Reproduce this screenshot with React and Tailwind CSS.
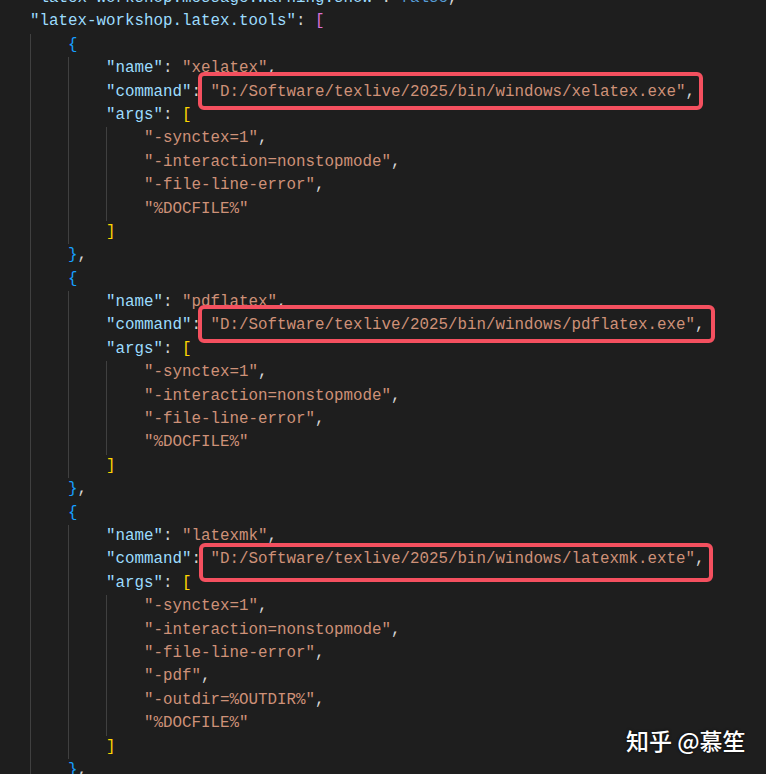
import React from 'react';

const K = 'text-[#9cdcfe]';
const S = 'text-[#ce9178]';
const P = 'text-[#d4d4d4]';
const B1 = 'text-[#da70d6]';
const B2 = 'text-[#179fff]';
const B3 = 'text-[#ffd700]';

const key = (k) => [[`"${k}"`, K], [': ', P]];
const str = (s, comma) => (comma ? [[`"${s}"`, S], [',', P]] : [[`"${s}"`, S]]);

function tool(name, exe, args) {
  const lines = [
    [1, [['{', B2]]],
    [2, [...key('name'), ...str(name, true)]],
    [2, [...key('command'), ...str(`D:/Software/texlive/2025/bin/windows/${exe}`, true)]],
    [2, [...key('args'), ['[', B3]]],
  ];
  args.forEach((a, i) => lines.push([3, str(a, i < args.length - 1)]));
  lines.push([2, [[']', B3]]]);
  lines.push([1, [['}', B2], [',', P]]]);
  return lines;
}

const common = ['-synctex=1', '-interaction=nonstopmode', '-file-line-error'];

const lines = [
  [0, [...key('latex-workshop.message.warning.show'), ['false', 'text-[#569cd6]'], [',', P]]],
  [0, [...key('latex-workshop.latex.tools'), ['[', B1]]],
  ...tool('xelatex', 'xelatex.exe', [...common, '%DOCFILE%']),
  ...tool('pdflatex', 'pdflatex.exe', [...common, '%DOCFILE%']),
  ...tool('latexmk', 'latexmk.exte', [...common, '-pdf', '-outdir=%OUTDIR%', '%DOCFILE%']),
];

function Line({ level, tokens }) {
  return (
    <div className="flex h-[23.4px] leading-[23.4px] whitespace-pre">
      {Array.from({ length: level }).map((_, i) => (
        <span key={i} className="w-[38px] shrink-0 h-full border-l border-[#404040]" />
      ))}
      {tokens.map(([t, c], i) => (
        <span key={i} className={c}>{t}</span>
      ))}
    </div>
  );
}

export default function App() {
  return (
    <div className="relative w-[766px] h-[774px] overflow-hidden bg-[#1e1e1e]">
      <div className="mt-[-13px] pl-[30px] font-['Liberation_Mono',monospace] text-[15.83px]">
        {lines.map(([level, tokens], i) => (
          <Line key={i} level={level} tokens={tokens} />
        ))}
      </div>

      {/* highlight boxes */}
      <div className="absolute left-[198px] top-[72px] w-[505px] h-[38px] border-[4px] border-[#f4505f] rounded-[6px]" />
      <div className="absolute left-[198px] top-[305px] w-[517px] h-[38px] border-[4px] border-[#f4505f] rounded-[6px]" />
      <div className="absolute left-[199px] top-[543px] w-[514px] h-[39px] border-[4px] border-[#f4505f] rounded-[6px]" />

      <div className="absolute left-[626px] top-[725px] text-white text-[23px] leading-[30px] font-medium font-['Noto_Sans_CJK_SC',sans-serif] [text-shadow:0_0_3px_rgba(0,0,0,0.8)]">
        知乎 @慕笙
      </div>
    </div>
  );
}
